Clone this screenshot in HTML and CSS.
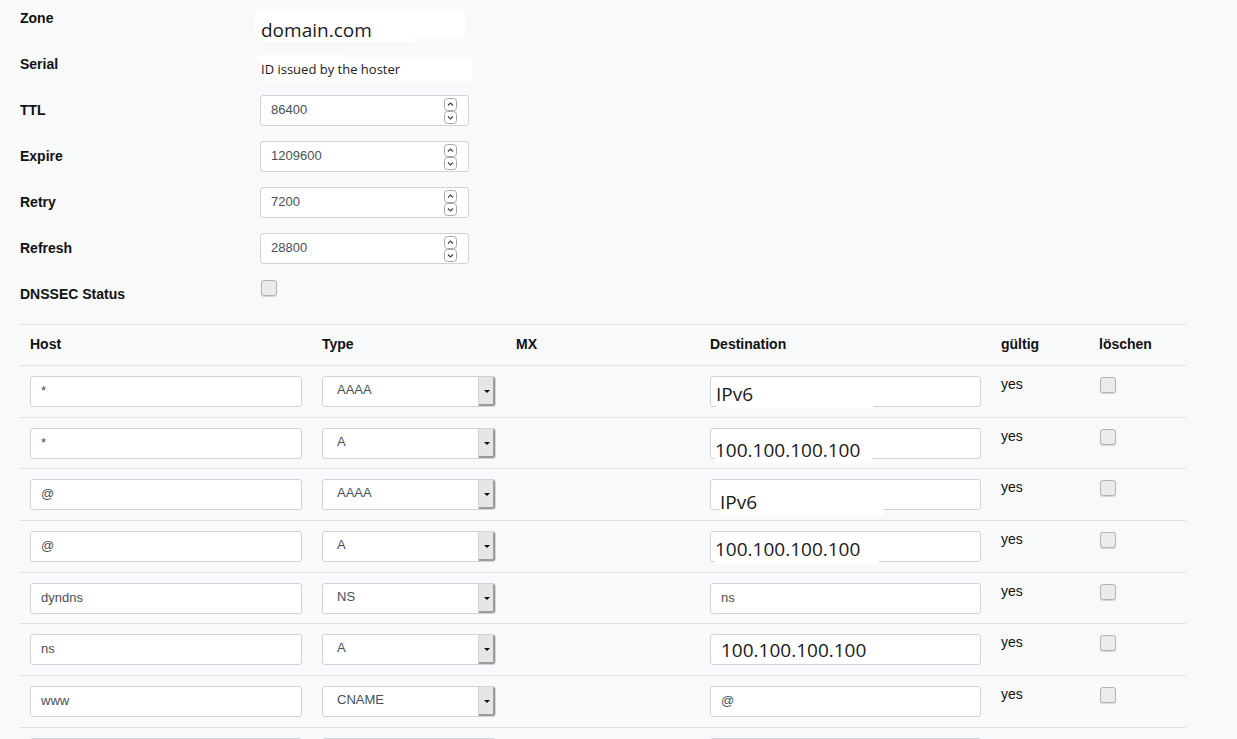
FILE: index.html
```html
<!DOCTYPE html>
<html lang="de">
<head>
<meta charset="utf-8">
<title>DNS Zone</title>
<link rel="stylesheet" href="styles.css">
</head>
<body>
<div class="page">
  <div class="form">
    <div class="lbl">Zone</div>
    <div class="field"><div class="patch-zone">domain.com</div></div>

    <div class="lbl">Serial</div>
    <div class="field"><div class="patch-serial">ID issued by the hoster</div></div>

    <div class="lbl">TTL</div>
    <div class="input num"><span>86400</span><svg class="spin" width="14" height="27" viewBox="0 0 14 27"><rect x="0.5" y="0.5" width="12" height="12" rx="3" fill="#fff" stroke="#a8a8a8"/><path d="M4 7.5 L6.5 5 L9 7.5" fill="none" stroke="#444" stroke-width="1.2"/><rect x="0.5" y="13.5" width="12" height="12" rx="3" fill="#fff" stroke="#a8a8a8"/><path d="M4 18.5 L6.5 21 L9 18.5" fill="none" stroke="#444" stroke-width="1.2"/></svg></div>

    <div class="lbl">Expire</div>
    <div class="input num"><span>1209600</span><svg class="spin" width="14" height="27" viewBox="0 0 14 27"><rect x="0.5" y="0.5" width="12" height="12" rx="3" fill="#fff" stroke="#a8a8a8"/><path d="M4 7.5 L6.5 5 L9 7.5" fill="none" stroke="#444" stroke-width="1.2"/><rect x="0.5" y="13.5" width="12" height="12" rx="3" fill="#fff" stroke="#a8a8a8"/><path d="M4 18.5 L6.5 21 L9 18.5" fill="none" stroke="#444" stroke-width="1.2"/></svg></div>

    <div class="lbl">Retry</div>
    <div class="input num"><span>7200</span><svg class="spin" width="14" height="27" viewBox="0 0 14 27"><rect x="0.5" y="0.5" width="12" height="12" rx="3" fill="#fff" stroke="#a8a8a8"/><path d="M4 7.5 L6.5 5 L9 7.5" fill="none" stroke="#444" stroke-width="1.2"/><rect x="0.5" y="13.5" width="12" height="12" rx="3" fill="#fff" stroke="#a8a8a8"/><path d="M4 18.5 L6.5 21 L9 18.5" fill="none" stroke="#444" stroke-width="1.2"/></svg></div>

    <div class="lbl">Refresh</div>
    <div class="input num"><span>28800</span><svg class="spin" width="14" height="27" viewBox="0 0 14 27"><rect x="0.5" y="0.5" width="12" height="12" rx="3" fill="#fff" stroke="#a8a8a8"/><path d="M4 7.5 L6.5 5 L9 7.5" fill="none" stroke="#444" stroke-width="1.2"/><rect x="0.5" y="13.5" width="12" height="12" rx="3" fill="#fff" stroke="#a8a8a8"/><path d="M4 18.5 L6.5 21 L9 18.5" fill="none" stroke="#444" stroke-width="1.2"/></svg></div>

    <div class="lbl">DNSSEC Status</div>
    <div class="field"><span class="check check-form"></span></div>
  </div>

  <table class="records">
    <colgroup>
      <col class="c-host"><col class="c-type"><col class="c-mx"><col class="c-dest"><col class="c-valid"><col class="c-del">
    </colgroup>
    <thead>
      <tr><th>Host</th><th>Type</th><th>MX</th><th>Destination</th><th>gültig</th><th>löschen</th></tr>
    </thead>
    <tbody>
      <tr>
        <td><div class="input">*</div></td>
        <td><div class="select"><span class="sel-text">AAAA</span><span class="arrow"><i></i></span></div></td>
        <td></td>
        <td><div class="input dest"><span class="patch dp1">IPv6</span></div></td>
        <td class="yes">yes</td>
        <td><span class="check"></span></td>
      </tr>
      <tr>
        <td><div class="input">*</div></td>
        <td><div class="select"><span class="sel-text">A</span><span class="arrow"><i></i></span></div></td>
        <td></td>
        <td><div class="input dest"><span class="patch dp2">100.100.100.100</span></div></td>
        <td class="yes">yes</td>
        <td><span class="check"></span></td>
      </tr>
      <tr>
        <td><div class="input">@</div></td>
        <td><div class="select"><span class="sel-text">AAAA</span><span class="arrow"><i></i></span></div></td>
        <td></td>
        <td><div class="input dest"><span class="patch dp3">IPv6</span></div></td>
        <td class="yes">yes</td>
        <td><span class="check"></span></td>
      </tr>
      <tr>
        <td><div class="input">@</div></td>
        <td><div class="select"><span class="sel-text">A</span><span class="arrow"><i></i></span></div></td>
        <td></td>
        <td><div class="input dest"><span class="patch dp4">100.100.100.100</span></div></td>
        <td class="yes">yes</td>
        <td><span class="check"></span></td>
      </tr>
      <tr>
        <td><div class="input">dyndns</div></td>
        <td><div class="select"><span class="sel-text">NS</span><span class="arrow"><i></i></span></div></td>
        <td></td>
        <td><div class="input">ns</div></td>
        <td class="yes">yes</td>
        <td><span class="check"></span></td>
      </tr>
      <tr>
        <td><div class="input">ns</div></td>
        <td><div class="select"><span class="sel-text">A</span><span class="arrow"><i></i></span></div></td>
        <td></td>
        <td><div class="input dest"><span class="patch dp6">100.100.100.100</span></div></td>
        <td class="yes">yes</td>
        <td><span class="check"></span></td>
      </tr>
      <tr>
        <td><div class="input">www</div></td>
        <td><div class="select"><span class="sel-text">CNAME</span><span class="arrow"><i></i></span></div></td>
        <td></td>
        <td><div class="input">@</div></td>
        <td class="yes">yes</td>
        <td><span class="check"></span></td>
      </tr>
      <tr>
        <td><div class="input"></div></td>
        <td><div class="select"><span class="sel-text"></span><span class="arrow"><i></i></span></div></td>
        <td></td>
        <td><div class="input"></div></td>
        <td class="yes"></td>
        <td><span class="check"></span></td>
      </tr>
    </tbody>
  </table>
</div>
</body>
</html>
```

FILE: styles.css
```css
html, body {
  margin: 0;
  padding: 0;
  background: #f8f9fa;
  overflow: hidden;
}

body {
  font-family: "Liberation Sans", Arial, sans-serif;
  font-size: 14px;
  color: #212529;
}

.page {
  padding: 3px 0 0 20px;
}

/* ---------- zone form ---------- */
.form {
  display: grid;
  grid-template-columns: 240px 209px;
  grid-auto-rows: 31px;
  row-gap: 15px;
  align-items: center;
}

.lbl {
  font-weight: bold;
  font-size: 14px;
  line-height: 16px;
  padding-bottom: 2px;
  color: #111;
}

.field {
  align-self: start;
  height: 31px;
}

.patch-zone {
  position: relative;
  margin: 8px 0 0 -5px;
  width: 210px;
  height: 26px;
  box-sizing: border-box;
  padding: 6px 0 0 6px;
  background: #fff;
  font-family: "Open Sans", sans-serif;
  font-size: 19px;
  line-height: 26px;
  color: #1a1a1a;
  white-space: nowrap;
}

.patch-zone::after {
  content: "";
  position: absolute;
  left: 6px;
  top: 26px;
  width: 154px;
  height: 5px;
  background: #fff;
}

.patch-serial {
  position: relative;
  margin-top: 10px;
  width: 212px;
  height: 22px;
  box-sizing: border-box;
  padding-left: 1px;
  background: #fff;
  font-family: "Open Sans", sans-serif;
  font-size: 13px;
  line-height: 20px;
  color: #1a1a1a;
  white-space: nowrap;
}

.patch-serial::before {
  content: "";
  position: absolute;
  left: -3px;
  top: -4px;
  width: 88px;
  height: 4px;
  background: #fff;
}

/* ---------- inputs ---------- */
.input {
  display: flex;
  align-items: center;
  height: 31px;
  box-sizing: border-box;
  padding: 0 10px 2px;
  background: #fff;
  border: 1px solid #ced4da;
  border-radius: 3px;
  font-size: 13px;
  line-height: 27px;
  color: #495057;
  white-space: nowrap;
}

.input.num {
  justify-content: space-between;
}

.spin {
  align-self: flex-start;
  margin-top: 2px;
  flex: none;
}

.input.dest {
  position: relative;
}

.patch {
  position: absolute;
  background: #fff;
  font-family: "Open Sans", sans-serif;
  font-size: 19px;
  line-height: 26px;
  color: #1a1a1a;
  white-space: nowrap;
}

.dp1 { left: 5px; top: 4px; width: 157px; height: 27px; }
.dp2 { left: 4px; top: 8px; width: 157px; height: 26px; }
.dp3 { left: 9px; top: 9px; width: 164px; height: 26px; }
.dp4 { left: 4px; top: 4px; width: 164px; height: 28px; }
.dp6 { left: 10px; top: 2px; width: 150px; height: 26px; }

/* ---------- select ---------- */
.select {
  display: flex;
  height: 31px;
  box-sizing: border-box;
  background: #fff;
  border: 1px solid #ced4da;
  border-radius: 3px;
  overflow: hidden;
  font-size: 13px;
  color: #495057;
}

.sel-text {
  flex: 1;
  padding: 0 0 4px 14px;
  line-height: 25px;
}

.arrow {
  flex: none;
  width: 16px;
  display: flex;
  align-items: center;
  justify-content: center;
  background: #e6e6e6;
  border-left: 1px solid #d2d2d2;
  box-shadow: inset -2px -2px 0 #9b9b9b;
}

.arrow i {
  display: block;
  width: 0;
  height: 0;
  border-left: 3px solid transparent;
  border-right: 3px solid transparent;
  border-top: 3px solid #111;
  margin: 0 1px 0 0;
}

/* ---------- checkbox ---------- */
.check {
  display: block;
  width: 16px;
  height: 16px;
  box-sizing: border-box;
  background: #ebebeb;
  border: 1px solid #b4b4b4;
  border-radius: 3px;
  box-shadow: 0 1px 1px rgba(0, 0, 0, 0.15);
  margin: 1px 0 0 1px;
}

.check-form {
  margin: 1px 0 0 1px;
}

/* ---------- table ---------- */
.records {
  margin-top: 14px;
  width: 1166px;
  table-layout: fixed;
  border-collapse: collapse;
}

.c-host { width: 292px; }
.c-type { width: 194px; }
.c-mx { width: 194px; }
.c-dest { width: 291px; }
.c-valid { width: 98px; }
.c-del { width: 97px; }

.records th {
  text-align: left;
  font-weight: bold;
  font-size: 14px;
  line-height: 16px;
  padding: 11px 10px 13px;
  border-top: 1px solid #dee2e6;
  border-bottom: 1px solid #dee2e6;
  color: #111;
}

.records td {
  padding: 10px 10px 9.67px;
  vertical-align: top;
  border-bottom: 1px solid #dee2e6;
}

.records td.yes {
  font-size: 14px;
  line-height: 16px;
  color: #111;
}
```
